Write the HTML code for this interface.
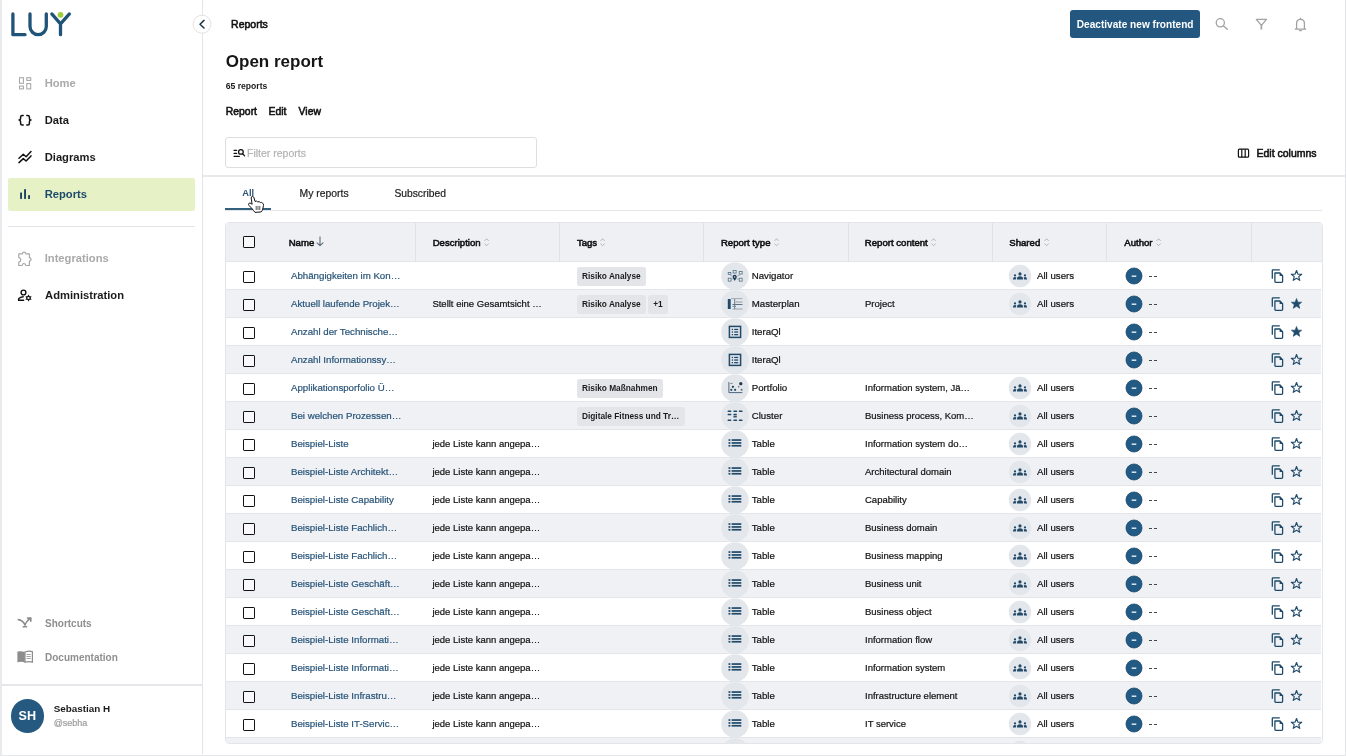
<!DOCTYPE html>
<html><head><meta charset="utf-8">
<style>
*{box-sizing:border-box;margin:0;padding:0}
html,body{width:1346px;height:756px;overflow:hidden;background:#fff}
body{position:relative;font-family:"Liberation Sans",sans-serif;color:#1b1b1b}
.abs{position:absolute}
.t{position:absolute;white-space:nowrap;line-height:1}
.r{-webkit-text-stroke:0.2px currentColor}
.sb{-webkit-text-stroke:0.55px currentColor}
svg{position:absolute;overflow:visible}
</style></head><body>
<div id="wrap" style="position:absolute;left:0;top:0;width:1346px;height:756px;will-change:transform">
<div class="abs" style="left:0;top:0;width:2px;height:756px;background:#e9eaed"></div>
<div class="abs" style="left:1345px;top:0;width:1px;height:756px;background:#e3e4e7"></div>
<div class="abs" style="left:0;top:754.5px;width:1346px;height:1.5px;background:#e6e7ea"></div>
<div class="abs" style="left:202px;top:0;width:1px;height:754px;background:#e3e4e8"></div>
<svg style="left:0;top:0" width="90" height="50" viewBox="0 0 90 50">
 <g fill="none" stroke="#1f5378" stroke-width="3.3" stroke-linecap="round" stroke-linejoin="round">
  <path d="M12.9 13.9V34.7H25"/>
  <path d="M30 13.9V26.5A8.15 8.15 0 0 0 46.3 26.5V13.9"/>
  <path d="M51.8 13.9L60.5 23.8L69.4 13.9M60.5 23.8V34.7"/>
 </g>
 <circle cx="60.5" cy="14.8" r="2.9" fill="#9fcd3c"/>
</svg>
<svg style="left:192px;top:14px" width="20" height="20" viewBox="0 0 20 20">
 <circle cx="10" cy="10.2" r="9" fill="#fff" stroke="#dfe1e5" stroke-width="1"/>
 <path d="M12 6.4L8 10.2L12 14" fill="none" stroke="#1c3444" stroke-width="1.5" stroke-linecap="round" stroke-linejoin="round"/>
</svg>
<svg style="left:0;top:60px" width="40" height="40" viewBox="0 60 40 40">
 <g fill="none" stroke="#a6a6a6" stroke-width="1.05">
  <rect x="19.5" y="77.7" width="3.9" height="5.6"/>
  <rect x="26.8" y="77.7" width="3.9" height="2.7"/>
  <rect x="19.5" y="86.1" width="3.9" height="2.8"/>
  <rect x="26.8" y="83.6" width="3.9" height="5.3"/>
 </g></svg>
<div class="t " style="left:44.7px;top:78.02px;font-size:11.2px;font-weight:700;color:#a9a9a9;">Home</div>
<svg style="left:0;top:100px" width="40" height="40" viewBox="0 100 40 40">
 <g fill="none" stroke="#111" stroke-width="1.5" stroke-linecap="round" stroke-linejoin="round">
  <path d="M23.2 115.4H22.2Q20.6 115.4 20.6 117V118.6Q20.6 120.1 19 120.1Q20.6 120.1 20.6 121.7V123.4Q20.6 124.9 22.2 124.9H23.2"/>
  <path d="M26.8 115.4H27.8Q29.4 115.4 29.4 117V118.6Q29.4 120.1 31 120.1Q29.4 120.1 29.4 121.7V123.4Q29.4 124.9 27.8 124.9H26.8"/>
 </g></svg>
<div class="t " style="left:44.7px;top:114.72px;font-size:11.2px;font-weight:700;color:#1b1b1b;">Data</div>
<svg style="left:0;top:140px" width="40" height="40" viewBox="0 140 40 40">
 <g fill="none" stroke="#111" stroke-width="1.5" stroke-linecap="round" stroke-linejoin="round">
  <path d="M19 158.3L23.3 154.3L26.1 156.7L31 151.6"/>
  <path d="M19 162.6L23.3 158.6L26.1 161L31 155.9"/>
 </g></svg>
<div class="t " style="left:44.7px;top:151.82px;font-size:11.2px;font-weight:700;color:#1b1b1b;">Diagrams</div>
<div class="abs" style="left:8px;top:178px;width:187px;height:33px;background:#e6f2c6;border-radius:2px"></div>
<svg style="left:0;top:180px" width="40" height="30" viewBox="0 180 40 30">
 <g fill="#1d4260">
  <rect x="20.1" y="192.4" width="1.9" height="6.5" rx="0.4"/>
  <rect x="24.1" y="189" width="1.9" height="9.9" rx="0.4"/>
  <rect x="28.1" y="195" width="1.9" height="3.9" rx="0.4"/>
 </g></svg>
<div class="t " style="left:44.7px;top:189.12px;font-size:11.2px;font-weight:700;color:#1d4a6b;">Reports</div>
<div class="abs" style="left:8px;top:226px;width:187px;height:1px;background:#e3e4e8"></div>
<svg style="left:0;top:241px" width="40" height="40" viewBox="0 240 40 40">
 <path d="M18.8 252.9H22.3Q22.6 251.2 24.1 251.2Q25.6 251.2 25.9 252.9H29.4V256.6Q31.1 256.9 31.1 258.4Q31.1 259.9 29.4 260.2V264.5H25.8Q25.4 262.5 23.9 262.5Q22.4 262.5 22 264.5H18.8V261.2Q20.8 260.8 20.8 258.8Q20.8 256.8 18.8 256.4Z" fill="none" stroke="#a8a8a8" stroke-width="1.2" stroke-linejoin="round"/>
</svg>
<div class="t " style="left:44.7px;top:253.12px;font-size:11.2px;font-weight:700;color:#a9a9a9;">Integrations</div>
<svg style="left:0;top:280px" width="40" height="30" viewBox="0 280 40 30">
 <g fill="none" stroke="#111" stroke-width="1.4" stroke-linecap="round" stroke-linejoin="round">
  <circle cx="23.5" cy="292.5" r="2.4"/>
  <path d="M23.2 296.8Q20.3 297.2 18.8 298.6Q18.4 299.2 18.6 300.3H23.6"/>
 </g>
 <g transform="translate(28.5 298)">
  <path d="M0 -3.6L1.05 -1.8H3.1L2.1 0L3.1 1.8H1.05L0 3.6L-1.05 1.8H-3.1L-2.1 0L-3.1 -1.8H-1.05Z" fill="#111"/>
  <circle r="1.1" fill="#fff"/>
 </g>
</svg>
<div class="t " style="left:45.1px;top:290.12px;font-size:11.2px;font-weight:700;color:#1b1b1b;">Administration</div>
<svg style="left:0;top:600px" width="40" height="40" viewBox="0 600 40 40">
 <g fill="none" stroke="#8c8c8c" stroke-width="1.6" stroke-linecap="round" stroke-linejoin="round">
  <path d="M18.3 619.6Q22.6 620 25 624.8"/>
  <path d="M25 624.8Q26.8 620.5 30.5 618.3"/>
  <path d="M27.6 618.1H30.8V621.2"/>
  <path d="M23.2 626.8H26.6"/>
 </g></svg>
<div class="t " style="left:45px;top:618.53px;font-size:10px;font-weight:700;color:#8f8f8f;">Shortcuts</div>
<svg style="left:0;top:640px" width="40" height="30" viewBox="0 640 40 30">
 <path d="M17.4 651.6Q21 650.6 24.8 652V662.2Q21 661.2 17.4 662.2Z" fill="#8c8c8c"/>
 <path d="M25 652Q28.8 650.6 32.4 651.6V662.2Q28.8 661.2 25 662.2Z" fill="none" stroke="#8c8c8c" stroke-width="1.2"/>
 <g stroke="#8c8c8c" stroke-width="0.8"><path d="M26.5 654.5H30.8M26.5 656.5H30.8M26.5 658.5H30.8"/></g>
</svg>
<div class="t " style="left:45px;top:652.74px;font-size:10px;font-weight:700;color:#8f8f8f;">Documentation</div>
<div class="abs" style="left:2px;top:684px;width:200px;height:1.5px;background:#e6e7ea"></div>
<div class="abs" style="left:10.6px;top:698.8px;width:33.8px;height:33.8px;border-radius:50%;background:#25597f"></div>
<div class="t " style="left:18.5px;top:709.63px;font-size:12.6px;font-weight:700;color:#fff;">SH</div>
<div class="t " style="left:53.7px;top:703.62px;font-size:9.9px;font-weight:700;color:#1b1b1b;">Sebastian H</div>
<div class="t r" style="left:53.7px;top:718.58px;font-size:9px;font-weight:400;color:#9c9c9c;">@sebha</div>
<div class="t sb" style="left:231.1px;top:18.71px;font-size:10.5px;font-weight:400;color:#111;">Reports</div>
<div class="abs" style="left:1070px;top:10.4px;width:129.5px;height:27.8px;background:#235780;border-radius:3px"></div>
<div class="t " style="left:1076.8px;top:20.45px;font-size:10.1px;font-weight:700;color:#fff;">Deactivate new frontend</div>
<svg style="left:1210px;top:14px" width="100" height="22" viewBox="1210 14 100 22">
 <g fill="none" stroke="#a2a2a2" stroke-width="1.3" stroke-linecap="round" stroke-linejoin="round">
  <circle cx="1220.3" cy="22.8" r="4.1"/>
  <path d="M1223.3 25.8L1227.3 29.3"/>
  <path d="M1256.3 19.4H1266.5L1261.4 25.4Z"/>
  <path d="M1261.4 25.2V29.5" stroke-width="1.7" stroke-linecap="butt"/>
  <path d="M1296.6 28.2V23.4Q1296.6 19.4 1300.5 19.4Q1304.4 19.4 1304.4 23.4V28.2L1305.6 29.2H1295.4Z"/>
  <path d="M1300.5 18.2V19.2M1299.6 30.6H1301.4"/>
 </g></svg>
<div class="t " style="left:225.8px;top:52.61px;font-size:17px;font-weight:700;color:#161616;">Open report</div>
<div class="t " style="left:225.8px;top:81.52px;font-size:8.6px;font-weight:700;color:#1b1b1b;">65 reports</div>
<div class="t sb" style="left:225.8px;top:106.60px;font-size:10.4px;font-weight:400;color:#111;">Report</div>
<div class="t sb" style="left:268.5px;top:106.60px;font-size:10.4px;font-weight:400;color:#111;">Edit</div>
<div class="t sb" style="left:298.6px;top:106.60px;font-size:10.4px;font-weight:400;color:#111;">View</div>
<div class="abs" style="left:225.4px;top:137.3px;width:311.6px;height:31.2px;border:1px solid #dcdee2;border-radius:3px;background:#fff"></div>
<svg style="left:230px;top:145px" width="20" height="16" viewBox="230 145 20 16">
 <g fill="none" stroke="#111" stroke-width="1.25" stroke-linecap="round">
  <path d="M234.1 150.4H236.6M234.1 153.4H236.6M234.1 156.4H239.3"/>
  <circle cx="240.9" cy="151.9" r="2.35"/>
  <path d="M242.7 153.8L244.6 155.9"/>
 </g></svg>
<div class="t r" style="left:247px;top:147.61px;font-size:10.5px;font-weight:400;color:#b2b2b2;">Filter reports</div>
<svg style="left:1236px;top:146px" width="16" height="14" viewBox="1236 146 16 14">
 <g fill="none" stroke="#111" stroke-width="1.2"><rect x="1238.4" y="149.2" width="10.2" height="8" rx="1"/><path d="M1241.8 149.2V157.2M1245.2 149.2V157.2"/></g>
</svg>
<div class="t sb" style="left:1256.5px;top:147.91px;font-size:10.5px;font-weight:400;color:#111;">Edit columns</div>
<div class="abs" style="left:203px;top:175px;width:1142px;height:2px;background:#e8e9ec"></div>
<div class="t " style="left:242.2px;top:188.63px;font-size:9.3px;font-weight:700;color:#2a5578;">All</div>
<div class="t r" style="left:299.5px;top:188.70px;font-size:10.4px;font-weight:400;color:#1b1b1b;">My reports</div>
<div class="t r" style="left:394.4px;top:188.78px;font-size:10.3px;font-weight:400;color:#1b1b1b;">Subscribed</div>
<div class="abs" style="left:225px;top:210px;width:1097px;height:1px;background:#e3e5e8"></div>
<div class="abs" style="left:225px;top:208.3px;width:45.7px;height:1.8px;background:#34607f"></div>
<div class="abs" style="left:225px;top:222px;width:1097.6px;height:521.6px;border:1px solid #e3e5ea;border-radius:4px;overflow:hidden;background:#fff">
<div class="abs" style="left:0;top:0;width:100%;height:39px;background:#eef0f4;border-bottom:1px solid #e3e5ea"></div>
<div class="abs" style="left:189.0px;top:0;width:1px;height:39px;background:#e0e2e7"></div>
<div class="abs" style="left:333.0px;top:0;width:1px;height:39px;background:#e0e2e7"></div>
<div class="abs" style="left:477.0px;top:0;width:1px;height:39px;background:#e0e2e7"></div>
<div class="abs" style="left:621.5px;top:0;width:1px;height:39px;background:#e0e2e7"></div>
<div class="abs" style="left:765.8px;top:0;width:1px;height:39px;background:#e0e2e7"></div>
<div class="abs" style="left:880.0999999999999px;top:0;width:1px;height:39px;background:#e0e2e7"></div>
<div class="abs" style="left:1024.6px;top:0;width:1px;height:39px;background:#e0e2e7"></div>
<div class="abs" style="left:16.80000000000001px;top:12.800000000000011px;width:12.3px;height:12.4px;border:1.4px solid #111;border-radius:1.1px;background:rgba(255,255,255,0.6)"></div>
<div class="t sb" style="left:62.7px;top:14.67px;font-size:9.6px;font-weight:400;color:#111;">Name</div>
<svg style="left:90px;top:13px" width="8" height="11" viewBox="0 0 8 11">
 <g fill="none" stroke="#5f6f7d" stroke-width="1.1" stroke-linecap="round" stroke-linejoin="round"><path d="M4 0.9V9.6M1 6.8L4 9.7L7 6.8"/></g></svg>
<div class="t sb" style="left:206.7px;top:14.67px;font-size:9.6px;font-weight:400;color:#111;">Description</div>
<div class="t sb" style="left:350.9px;top:14.67px;font-size:9.6px;font-weight:400;color:#111;">Tags</div>
<div class="t sb" style="left:494.9px;top:14.67px;font-size:9.6px;font-weight:400;color:#111;">Report type</div>
<div class="t sb" style="left:638.8px;top:14.67px;font-size:9.6px;font-weight:400;color:#111;">Report content</div>
<div class="t sb" style="left:783.3px;top:14.67px;font-size:9.6px;font-weight:400;color:#111;">Shared</div>
<div class="t sb" style="left:898.3px;top:14.67px;font-size:9.6px;font-weight:400;color:#111;">Author</div>
<svg style="left:257.9px;top:14.5px" width="6" height="9" viewBox="0 0 6 9">
 <g fill="none" stroke="#a9a9a9" stroke-width="0.85" stroke-linecap="round" stroke-linejoin="round"><path d="M0.8 2.6L2.6 0.8L4.4 2.6M0.8 5.9L2.6 7.7L4.4 5.9"/></g></svg>
<svg style="left:374.4px;top:14.5px" width="6" height="9" viewBox="0 0 6 9">
 <g fill="none" stroke="#a9a9a9" stroke-width="0.85" stroke-linecap="round" stroke-linejoin="round"><path d="M0.8 2.6L2.6 0.8L4.4 2.6M0.8 5.9L2.6 7.7L4.4 5.9"/></g></svg>
<svg style="left:547.7px;top:14.5px" width="6" height="9" viewBox="0 0 6 9">
 <g fill="none" stroke="#a9a9a9" stroke-width="0.85" stroke-linecap="round" stroke-linejoin="round"><path d="M0.8 2.6L2.6 0.8L4.4 2.6M0.8 5.9L2.6 7.7L4.4 5.9"/></g></svg>
<svg style="left:705.0px;top:14.5px" width="6" height="9" viewBox="0 0 6 9">
 <g fill="none" stroke="#a9a9a9" stroke-width="0.85" stroke-linecap="round" stroke-linejoin="round"><path d="M0.8 2.6L2.6 0.8L4.4 2.6M0.8 5.9L2.6 7.7L4.4 5.9"/></g></svg>
<svg style="left:817.5px;top:14.5px" width="6" height="9" viewBox="0 0 6 9">
 <g fill="none" stroke="#a9a9a9" stroke-width="0.85" stroke-linecap="round" stroke-linejoin="round"><path d="M0.8 2.6L2.6 0.8L4.4 2.6M0.8 5.9L2.6 7.7L4.4 5.9"/></g></svg>
<svg style="left:929.8px;top:14.5px" width="6" height="9" viewBox="0 0 6 9">
 <g fill="none" stroke="#a9a9a9" stroke-width="0.85" stroke-linecap="round" stroke-linejoin="round"><path d="M0.8 2.6L2.6 0.8L4.4 2.6M0.8 5.9L2.6 7.7L4.4 5.9"/></g></svg>
<div class="abs" style="left:0;top:39px;width:calc(100% - 0.8px);height:28px;background:#fff;border-bottom:1px solid #e3e5ea"></div>
<div class="abs" style="left:0;top:67px;width:calc(100% - 0.8px);height:28px;background:#eff1f5;border-bottom:1px solid #e3e5ea"></div>
<div class="abs" style="left:0;top:95px;width:calc(100% - 0.8px);height:28px;background:#fff;border-bottom:1px solid #e3e5ea"></div>
<div class="abs" style="left:0;top:123px;width:calc(100% - 0.8px);height:28px;background:#eff1f5;border-bottom:1px solid #e3e5ea"></div>
<div class="abs" style="left:0;top:151px;width:calc(100% - 0.8px);height:28px;background:#fff;border-bottom:1px solid #e3e5ea"></div>
<div class="abs" style="left:0;top:179px;width:calc(100% - 0.8px);height:28px;background:#eff1f5;border-bottom:1px solid #e3e5ea"></div>
<div class="abs" style="left:0;top:207px;width:calc(100% - 0.8px);height:28px;background:#fff;border-bottom:1px solid #e3e5ea"></div>
<div class="abs" style="left:0;top:235px;width:calc(100% - 0.8px);height:28px;background:#eff1f5;border-bottom:1px solid #e3e5ea"></div>
<div class="abs" style="left:0;top:263px;width:calc(100% - 0.8px);height:28px;background:#fff;border-bottom:1px solid #e3e5ea"></div>
<div class="abs" style="left:0;top:291px;width:calc(100% - 0.8px);height:28px;background:#eff1f5;border-bottom:1px solid #e3e5ea"></div>
<div class="abs" style="left:0;top:319px;width:calc(100% - 0.8px);height:28px;background:#fff;border-bottom:1px solid #e3e5ea"></div>
<div class="abs" style="left:0;top:347px;width:calc(100% - 0.8px);height:28px;background:#eff1f5;border-bottom:1px solid #e3e5ea"></div>
<div class="abs" style="left:0;top:375px;width:calc(100% - 0.8px);height:28px;background:#fff;border-bottom:1px solid #e3e5ea"></div>
<div class="abs" style="left:0;top:403px;width:calc(100% - 0.8px);height:28px;background:#eff1f5;border-bottom:1px solid #e3e5ea"></div>
<div class="abs" style="left:0;top:431px;width:calc(100% - 0.8px);height:28px;background:#fff;border-bottom:1px solid #e3e5ea"></div>
<div class="abs" style="left:0;top:459px;width:calc(100% - 0.8px);height:28px;background:#eff1f5;border-bottom:1px solid #e3e5ea"></div>
<div class="abs" style="left:0;top:487px;width:calc(100% - 0.8px);height:28px;background:#fff;border-bottom:1px solid #e3e5ea"></div>
<div class="abs" style="left:16.80000000000001px;top:47.60000000000002px;width:12.3px;height:12.4px;border:1.4px solid #111;border-radius:1.1px;background:rgba(255,255,255,0.6)"></div>
<div class="t r" style="left:65px;top:47.79px;font-size:9.7px;font-weight:400;color:#285478;">Abhängigkeiten im Kon…</div>
<div class="abs" style="left:350.70000000000005px;top:43.5px;display:flex;gap:1.8px"><div style="height:19px;padding:0 5.3px;background:#e3e5e9;border-radius:2.5px;font-size:8.3px;font-weight:700;line-height:19px;white-space:nowrap;color:#1b1b1b">Risiko Analyse</div></div>
<svg style="left:494.5px;top:39px" width="28" height="28" viewBox="-14 -14 28 28"><circle r="13.8" fill="#e3e6ea"/><g fill="#eef3f7" stroke="#5f7a90" stroke-width="0.9"><rect x="-6.75" y="-3.55" width="2.6" height="1.9"/><rect x="-1.85" y="-5.55" width="3" height="2.6"/><rect x="4.25" y="-4.55" width="2.9" height="2.6"/><rect x="-6.75" y="2.25" width="2.8" height="2.9"/><rect x="4.25" y="2.25" width="2.9" height="2.9"/></g><path d="M-5.2 -1.5L-2.6 0.2M5.4 -1.5L2.2 0.2M-3.6 3.3L-2.1 2.7M4 3.3L1.6 2.7" stroke="#7890a3" stroke-width="0.7" fill="none"/><path d="M-0.3 4.9L-2.1 1.9A2.05 2.05 0 1 1 1.5 1.9Z" fill="#1c3a52"/><circle cx="-0.3" cy="0.95" r="0.75" fill="#dfe8ef"/></svg>
<div class="t r" style="left:525.7px;top:47.79px;font-size:9.7px;font-weight:400;color:#111;">Navigator</div>
<svg style="left:782.3px;top:40.80000000000001px" width="24" height="24" viewBox="-12 -12 24 24"><circle r="11.2" fill="#e3e6ea"/><g fill="#1f4a6a"><circle cx="0" cy="-2.1" r="1.6"/><path d="M-3.1 3.5Q-3.1 0.2 0 0.2Q3.1 0.2 3.1 3.5Z"/><circle cx="-5" cy="-0.6" r="1.1"/><path d="M-7.1 3.5Q-7.1 1.1 -5 1.1Q-3.9 1.1 -3.6 1.8Q-4.1 2.6 -4.2 3.5Z"/><circle cx="5" cy="-0.6" r="1.1"/><path d="M7.1 3.5Q7.1 1.1 5 1.1Q3.9 1.1 3.6 1.8Q4.1 2.6 4.2 3.5Z"/></g></svg>
<div class="t r" style="left:811px;top:47.79px;font-size:9.7px;font-weight:400;color:#111;">All users</div>
<svg style="left:898.5px;top:43.60000000000002px" width="18" height="18" viewBox="-9 -9 18 18"><circle r="8.05" fill="#215a84" stroke="#1a4262" stroke-width="0.7"/><rect x="-2.3" y="-0.55" width="4.6" height="1.5" fill="#dfe7ee"/></svg>
<div class="abs" style="left:923px;top:53px;width:3px;height:1.2px;background:#444"></div><div class="abs" style="left:928px;top:53px;width:3px;height:1.2px;background:#444"></div>
<svg style="left:1045px;top:45.5px" width="14" height="15" viewBox="0 0 14 15"><g fill="none" stroke="#1f4a6a" stroke-width="1.3" stroke-linejoin="round"><path d="M1.3 9.8V1.6Q1.3 0.9 2 0.9H8.8"/><path d="M3.9 4V12.6Q3.9 13.4 4.6 13.4H10.8Q11.6 13.4 11.6 12.6V6.6L9 4Z"/></g><path d="M8.6 3.6L12 7H8.6Z" fill="#1f4a6a"/></svg>
<svg style="left:1064.6px;top:47.19999999999999px" width="11" height="11" viewBox="0 0 10.4 10.2"><path d="M5.2 0.4L6.5 3.8L10.1 3.9L7.3 6.2L8.3 9.7L5.2 7.7L2.1 9.7L3.1 6.2L0.3 3.9L3.9 3.8Z" fill="none" stroke="#1f4a6a" stroke-width="1.1" stroke-linejoin="round"/></svg>
<div class="abs" style="left:16.80000000000001px;top:75.60000000000002px;width:12.3px;height:12.4px;border:1.4px solid #111;border-radius:1.1px;background:rgba(255,255,255,0.6)"></div>
<div class="t r" style="left:65px;top:75.79px;font-size:9.7px;font-weight:400;color:#285478;">Aktuell laufende Projek…</div>
<div class="t r" style="left:206.4px;top:75.96px;font-size:9.5px;font-weight:400;color:#111;">Stellt eine Gesamtsicht …</div>
<div class="abs" style="left:350.70000000000005px;top:71.5px;display:flex;gap:1.8px"><div style="height:19px;padding:0 5.3px;background:#e3e5e9;border-radius:2.5px;font-size:8.3px;font-weight:700;line-height:19px;white-space:nowrap;color:#1b1b1b">Risiko Analyse</div><div style="height:19px;padding:0 5.4px;background:#e3e5e9;border-radius:2.5px;font-size:8.3px;font-weight:700;line-height:19px;white-space:nowrap;color:#1b1b1b">+1</div></div>
<svg style="left:494.5px;top:67px" width="28" height="28" viewBox="-14 -14 28 28"><circle r="13.8" fill="#e3e6ea"/><rect x="-7.2" y="-5.1" width="2.9" height="10.2" rx="0.4" fill="#1f4a6a"/><path d="M-4 -5.4H7.5" stroke="#8d9cab" stroke-width="0.8"/><path d="M-0.3 -5V5.2" stroke="#5f7488" stroke-width="0.9"/><path d="M0.5 -1.95H7.5" stroke="#a9b5c1" stroke-width="1.5"/><path d="M-2.5 0.5H7.5" stroke="#5d7285" stroke-width="1"/><path d="M-2.5 2.4H1" stroke="#6f8293" stroke-width="0.9"/><path d="M-2.5 5H7.5" stroke="#8d9cab" stroke-width="0.9"/></svg>
<div class="t r" style="left:525.7px;top:75.79px;font-size:9.7px;font-weight:400;color:#111;">Masterplan</div>
<div class="t r" style="left:639px;top:75.96px;font-size:9.5px;font-weight:400;color:#111;">Project</div>
<svg style="left:782.3px;top:68.80000000000001px" width="24" height="24" viewBox="-12 -12 24 24"><circle r="11.2" fill="#e3e6ea"/><g fill="#1f4a6a"><circle cx="0" cy="-2.1" r="1.6"/><path d="M-3.1 3.5Q-3.1 0.2 0 0.2Q3.1 0.2 3.1 3.5Z"/><circle cx="-5" cy="-0.6" r="1.1"/><path d="M-7.1 3.5Q-7.1 1.1 -5 1.1Q-3.9 1.1 -3.6 1.8Q-4.1 2.6 -4.2 3.5Z"/><circle cx="5" cy="-0.6" r="1.1"/><path d="M7.1 3.5Q7.1 1.1 5 1.1Q3.9 1.1 3.6 1.8Q4.1 2.6 4.2 3.5Z"/></g></svg>
<div class="t r" style="left:811px;top:75.79px;font-size:9.7px;font-weight:400;color:#111;">All users</div>
<svg style="left:898.5px;top:71.60000000000002px" width="18" height="18" viewBox="-9 -9 18 18"><circle r="8.05" fill="#215a84" stroke="#1a4262" stroke-width="0.7"/><rect x="-2.3" y="-0.55" width="4.6" height="1.5" fill="#dfe7ee"/></svg>
<div class="abs" style="left:923px;top:81px;width:3px;height:1.2px;background:#444"></div><div class="abs" style="left:928px;top:81px;width:3px;height:1.2px;background:#444"></div>
<svg style="left:1045px;top:73.5px" width="14" height="15" viewBox="0 0 14 15"><g fill="none" stroke="#1f4a6a" stroke-width="1.3" stroke-linejoin="round"><path d="M1.3 9.8V1.6Q1.3 0.9 2 0.9H8.8"/><path d="M3.9 4V12.6Q3.9 13.4 4.6 13.4H10.8Q11.6 13.4 11.6 12.6V6.6L9 4Z"/></g><path d="M8.6 3.6L12 7H8.6Z" fill="#1f4a6a"/></svg>
<svg style="left:1064.6px;top:75.19999999999999px" width="11" height="11" viewBox="0 0 10.4 10.2"><path d="M5.2 0.4L6.5 3.8L10.1 3.9L7.3 6.2L8.3 9.7L5.2 7.7L2.1 9.7L3.1 6.2L0.3 3.9L3.9 3.8Z" fill="#1f4a6a" stroke="#1f4a6a" stroke-width="0.6" stroke-linejoin="round"/></svg>
<div class="abs" style="left:16.80000000000001px;top:103.60000000000002px;width:12.3px;height:12.4px;border:1.4px solid #111;border-radius:1.1px;background:rgba(255,255,255,0.6)"></div>
<div class="t r" style="left:65px;top:103.79px;font-size:9.7px;font-weight:400;color:#285478;">Anzahl der Technische…</div>
<svg style="left:494.5px;top:95px" width="28" height="28" viewBox="-14 -14 28 28"><circle r="13.8" fill="#e3e6ea"/><rect x="-5.6" y="-5.6" width="11.2" height="11" fill="none" stroke="#1f4a6a" stroke-width="1.5"/><g fill="#1f4a6a"><rect x="-3.3" y="-3.2" width="1.4" height="1.3"/><rect x="-3.3" y="-0.6" width="1.4" height="1.3"/><rect x="-3.3" y="2" width="1.4" height="1.3"/><rect x="-0.8" y="-3.2" width="4" height="1.3"/><rect x="-0.8" y="-0.6" width="4" height="1.3"/><rect x="-0.8" y="2" width="4" height="1.3"/></g></svg>
<div class="t r" style="left:525.7px;top:103.79px;font-size:9.7px;font-weight:400;color:#111;">IteraQl</div>
<svg style="left:898.5px;top:99.60000000000002px" width="18" height="18" viewBox="-9 -9 18 18"><circle r="8.05" fill="#215a84" stroke="#1a4262" stroke-width="0.7"/><rect x="-2.3" y="-0.55" width="4.6" height="1.5" fill="#dfe7ee"/></svg>
<div class="abs" style="left:923px;top:109px;width:3px;height:1.2px;background:#444"></div><div class="abs" style="left:928px;top:109px;width:3px;height:1.2px;background:#444"></div>
<svg style="left:1045px;top:101.5px" width="14" height="15" viewBox="0 0 14 15"><g fill="none" stroke="#1f4a6a" stroke-width="1.3" stroke-linejoin="round"><path d="M1.3 9.8V1.6Q1.3 0.9 2 0.9H8.8"/><path d="M3.9 4V12.6Q3.9 13.4 4.6 13.4H10.8Q11.6 13.4 11.6 12.6V6.6L9 4Z"/></g><path d="M8.6 3.6L12 7H8.6Z" fill="#1f4a6a"/></svg>
<svg style="left:1064.6px;top:103.19999999999999px" width="11" height="11" viewBox="0 0 10.4 10.2"><path d="M5.2 0.4L6.5 3.8L10.1 3.9L7.3 6.2L8.3 9.7L5.2 7.7L2.1 9.7L3.1 6.2L0.3 3.9L3.9 3.8Z" fill="#1f4a6a" stroke="#1f4a6a" stroke-width="0.6" stroke-linejoin="round"/></svg>
<div class="abs" style="left:16.80000000000001px;top:131.60000000000002px;width:12.3px;height:12.4px;border:1.4px solid #111;border-radius:1.1px;background:rgba(255,255,255,0.6)"></div>
<div class="t r" style="left:65px;top:131.79px;font-size:9.7px;font-weight:400;color:#285478;">Anzahl Informationssy…</div>
<svg style="left:494.5px;top:123px" width="28" height="28" viewBox="-14 -14 28 28"><circle r="13.8" fill="#e3e6ea"/><rect x="-5.6" y="-5.6" width="11.2" height="11" fill="none" stroke="#1f4a6a" stroke-width="1.5"/><g fill="#1f4a6a"><rect x="-3.3" y="-3.2" width="1.4" height="1.3"/><rect x="-3.3" y="-0.6" width="1.4" height="1.3"/><rect x="-3.3" y="2" width="1.4" height="1.3"/><rect x="-0.8" y="-3.2" width="4" height="1.3"/><rect x="-0.8" y="-0.6" width="4" height="1.3"/><rect x="-0.8" y="2" width="4" height="1.3"/></g></svg>
<div class="t r" style="left:525.7px;top:131.79px;font-size:9.7px;font-weight:400;color:#111;">IteraQl</div>
<svg style="left:898.5px;top:127.60000000000002px" width="18" height="18" viewBox="-9 -9 18 18"><circle r="8.05" fill="#215a84" stroke="#1a4262" stroke-width="0.7"/><rect x="-2.3" y="-0.55" width="4.6" height="1.5" fill="#dfe7ee"/></svg>
<div class="abs" style="left:923px;top:137px;width:3px;height:1.2px;background:#444"></div><div class="abs" style="left:928px;top:137px;width:3px;height:1.2px;background:#444"></div>
<svg style="left:1045px;top:129.5px" width="14" height="15" viewBox="0 0 14 15"><g fill="none" stroke="#1f4a6a" stroke-width="1.3" stroke-linejoin="round"><path d="M1.3 9.8V1.6Q1.3 0.9 2 0.9H8.8"/><path d="M3.9 4V12.6Q3.9 13.4 4.6 13.4H10.8Q11.6 13.4 11.6 12.6V6.6L9 4Z"/></g><path d="M8.6 3.6L12 7H8.6Z" fill="#1f4a6a"/></svg>
<svg style="left:1064.6px;top:131.2px" width="11" height="11" viewBox="0 0 10.4 10.2"><path d="M5.2 0.4L6.5 3.8L10.1 3.9L7.3 6.2L8.3 9.7L5.2 7.7L2.1 9.7L3.1 6.2L0.3 3.9L3.9 3.8Z" fill="none" stroke="#1f4a6a" stroke-width="1.1" stroke-linejoin="round"/></svg>
<div class="abs" style="left:16.80000000000001px;top:159.60000000000002px;width:12.3px;height:12.4px;border:1.4px solid #111;border-radius:1.1px;background:rgba(255,255,255,0.6)"></div>
<div class="t r" style="left:65px;top:159.79px;font-size:9.7px;font-weight:400;color:#285478;">Applikationsporfolio Ü…</div>
<div class="abs" style="left:350.70000000000005px;top:155.5px;display:flex;gap:1.8px"><div style="height:19px;padding:0 5.3px;background:#e3e5e9;border-radius:2.5px;font-size:8.3px;font-weight:700;line-height:19px;white-space:nowrap;color:#1b1b1b">Risiko Maßnahmen</div></div>
<svg style="left:494.5px;top:151px" width="28" height="28" viewBox="-14 -14 28 28"><circle r="13.8" fill="#e3e6ea"/><path d="M-6.1 -5.9V4.6H7.3" fill="none" stroke="#4f677b" stroke-width="1"/><g fill="#1f4a6a"><circle cx="5.8" cy="-4.35" r="1.65" fill="#1b3a52"/><circle cx="-2.1" cy="-1.2" r="1.1" fill="#1b3a52"/><circle cx="3.7" cy="-1.2" r="0.8" fill="#56697a"/><circle cx="-3.7" cy="1.8" r="1.1"/><circle cx="0.1" cy="1.8" r="1.1"/><circle cx="6.6" cy="1.8" r="1" fill="#56697a"/><rect x="-4.5" y="-5.05" width="2" height="0.8" fill="#56697a"/></g></svg>
<div class="t r" style="left:525.7px;top:159.79px;font-size:9.7px;font-weight:400;color:#111;">Portfolio</div>
<div class="t r" style="left:639px;top:159.96px;font-size:9.5px;font-weight:400;color:#111;">Information system, Jä…</div>
<svg style="left:782.3px;top:152.8px" width="24" height="24" viewBox="-12 -12 24 24"><circle r="11.2" fill="#e3e6ea"/><g fill="#1f4a6a"><circle cx="0" cy="-2.1" r="1.6"/><path d="M-3.1 3.5Q-3.1 0.2 0 0.2Q3.1 0.2 3.1 3.5Z"/><circle cx="-5" cy="-0.6" r="1.1"/><path d="M-7.1 3.5Q-7.1 1.1 -5 1.1Q-3.9 1.1 -3.6 1.8Q-4.1 2.6 -4.2 3.5Z"/><circle cx="5" cy="-0.6" r="1.1"/><path d="M7.1 3.5Q7.1 1.1 5 1.1Q3.9 1.1 3.6 1.8Q4.1 2.6 4.2 3.5Z"/></g></svg>
<div class="t r" style="left:811px;top:159.79px;font-size:9.7px;font-weight:400;color:#111;">All users</div>
<svg style="left:898.5px;top:155.60000000000002px" width="18" height="18" viewBox="-9 -9 18 18"><circle r="8.05" fill="#215a84" stroke="#1a4262" stroke-width="0.7"/><rect x="-2.3" y="-0.55" width="4.6" height="1.5" fill="#dfe7ee"/></svg>
<div class="abs" style="left:923px;top:165px;width:3px;height:1.2px;background:#444"></div><div class="abs" style="left:928px;top:165px;width:3px;height:1.2px;background:#444"></div>
<svg style="left:1045px;top:157.5px" width="14" height="15" viewBox="0 0 14 15"><g fill="none" stroke="#1f4a6a" stroke-width="1.3" stroke-linejoin="round"><path d="M1.3 9.8V1.6Q1.3 0.9 2 0.9H8.8"/><path d="M3.9 4V12.6Q3.9 13.4 4.6 13.4H10.8Q11.6 13.4 11.6 12.6V6.6L9 4Z"/></g><path d="M8.6 3.6L12 7H8.6Z" fill="#1f4a6a"/></svg>
<svg style="left:1064.6px;top:159.2px" width="11" height="11" viewBox="0 0 10.4 10.2"><path d="M5.2 0.4L6.5 3.8L10.1 3.9L7.3 6.2L8.3 9.7L5.2 7.7L2.1 9.7L3.1 6.2L0.3 3.9L3.9 3.8Z" fill="none" stroke="#1f4a6a" stroke-width="1.1" stroke-linejoin="round"/></svg>
<div class="abs" style="left:16.80000000000001px;top:187.60000000000002px;width:12.3px;height:12.4px;border:1.4px solid #111;border-radius:1.1px;background:rgba(255,255,255,0.6)"></div>
<div class="t r" style="left:65px;top:187.79px;font-size:9.7px;font-weight:400;color:#285478;">Bei welchen Prozessen…</div>
<div class="abs" style="left:350.70000000000005px;top:183.5px;display:flex;gap:1.8px"><div style="height:19px;padding:0 5.3px;background:#e3e5e9;border-radius:2.5px;font-size:8.3px;font-weight:700;line-height:19px;white-space:nowrap;color:#1b1b1b">Digitale Fitness und Tr…</div></div>
<svg style="left:494.5px;top:179px" width="28" height="28" viewBox="-14 -14 28 28"><circle r="13.8" fill="#e3e6ea"/><g fill="#1f4a6a"><rect x="-7.4" y="-5.5" width="3.7" height="1.6" rx="0.5"/><rect x="-7.4" y="3.5" width="3.7" height="1.6" rx="0.5"/><rect x="-1.6" y="-5.5" width="3.7" height="1.6" rx="0.5"/><rect x="-1.6" y="3.5" width="3.7" height="1.6" rx="0.5"/><rect x="3.8" y="-5.5" width="3.7" height="1.6" rx="0.5"/><rect x="3.8" y="3.5" width="3.7" height="1.6" rx="0.5"/><rect x="-7.4" y="-2.3" width="3.7" height="1.6" rx="0.5"/><rect x="-1.6" y="-2.2" width="3.4" height="1.5" rx="0.4"/><rect x="-1.6" y="-0.3" width="3.4" height="1.9" rx="0.4" fill="#2f5573"/></g></svg>
<div class="t r" style="left:525.7px;top:187.79px;font-size:9.7px;font-weight:400;color:#111;">Cluster</div>
<div class="t r" style="left:639px;top:187.96px;font-size:9.5px;font-weight:400;color:#111;">Business process, Kom…</div>
<svg style="left:782.3px;top:180.8px" width="24" height="24" viewBox="-12 -12 24 24"><circle r="11.2" fill="#e3e6ea"/><g fill="#1f4a6a"><circle cx="0" cy="-2.1" r="1.6"/><path d="M-3.1 3.5Q-3.1 0.2 0 0.2Q3.1 0.2 3.1 3.5Z"/><circle cx="-5" cy="-0.6" r="1.1"/><path d="M-7.1 3.5Q-7.1 1.1 -5 1.1Q-3.9 1.1 -3.6 1.8Q-4.1 2.6 -4.2 3.5Z"/><circle cx="5" cy="-0.6" r="1.1"/><path d="M7.1 3.5Q7.1 1.1 5 1.1Q3.9 1.1 3.6 1.8Q4.1 2.6 4.2 3.5Z"/></g></svg>
<div class="t r" style="left:811px;top:187.79px;font-size:9.7px;font-weight:400;color:#111;">All users</div>
<svg style="left:898.5px;top:183.60000000000002px" width="18" height="18" viewBox="-9 -9 18 18"><circle r="8.05" fill="#215a84" stroke="#1a4262" stroke-width="0.7"/><rect x="-2.3" y="-0.55" width="4.6" height="1.5" fill="#dfe7ee"/></svg>
<div class="abs" style="left:923px;top:193px;width:3px;height:1.2px;background:#444"></div><div class="abs" style="left:928px;top:193px;width:3px;height:1.2px;background:#444"></div>
<svg style="left:1045px;top:185.5px" width="14" height="15" viewBox="0 0 14 15"><g fill="none" stroke="#1f4a6a" stroke-width="1.3" stroke-linejoin="round"><path d="M1.3 9.8V1.6Q1.3 0.9 2 0.9H8.8"/><path d="M3.9 4V12.6Q3.9 13.4 4.6 13.4H10.8Q11.6 13.4 11.6 12.6V6.6L9 4Z"/></g><path d="M8.6 3.6L12 7H8.6Z" fill="#1f4a6a"/></svg>
<svg style="left:1064.6px;top:187.2px" width="11" height="11" viewBox="0 0 10.4 10.2"><path d="M5.2 0.4L6.5 3.8L10.1 3.9L7.3 6.2L8.3 9.7L5.2 7.7L2.1 9.7L3.1 6.2L0.3 3.9L3.9 3.8Z" fill="none" stroke="#1f4a6a" stroke-width="1.1" stroke-linejoin="round"/></svg>
<div class="abs" style="left:16.80000000000001px;top:215.60000000000002px;width:12.3px;height:12.4px;border:1.4px solid #111;border-radius:1.1px;background:rgba(255,255,255,0.6)"></div>
<div class="t r" style="left:65px;top:215.79px;font-size:9.7px;font-weight:400;color:#285478;">Beispiel-Liste</div>
<div class="t r" style="left:206.4px;top:215.96px;font-size:9.5px;font-weight:400;color:#111;">jede Liste kann angepa…</div>
<svg style="left:494.5px;top:207px" width="28" height="28" viewBox="-14 -14 28 28"><circle r="13.8" fill="#e3e6ea"/><g fill="#1f4a6a"><rect x="-6.5" y="-4.8" width="1.9" height="1.7"/><rect x="-6.5" y="-1.9" width="1.9" height="1.7"/><rect x="-6.5" y="0.9" width="1.9" height="1.7"/><rect x="-3.4" y="-4.8" width="9.7" height="1.7"/><rect x="-3.4" y="-1.9" width="9.7" height="1.7"/><rect x="-3.4" y="0.9" width="9.7" height="1.7"/></g></svg>
<div class="t r" style="left:525.7px;top:215.79px;font-size:9.7px;font-weight:400;color:#111;">Table</div>
<div class="t r" style="left:639px;top:215.96px;font-size:9.5px;font-weight:400;color:#111;">Information system do…</div>
<svg style="left:782.3px;top:208.8px" width="24" height="24" viewBox="-12 -12 24 24"><circle r="11.2" fill="#e3e6ea"/><g fill="#1f4a6a"><circle cx="0" cy="-2.1" r="1.6"/><path d="M-3.1 3.5Q-3.1 0.2 0 0.2Q3.1 0.2 3.1 3.5Z"/><circle cx="-5" cy="-0.6" r="1.1"/><path d="M-7.1 3.5Q-7.1 1.1 -5 1.1Q-3.9 1.1 -3.6 1.8Q-4.1 2.6 -4.2 3.5Z"/><circle cx="5" cy="-0.6" r="1.1"/><path d="M7.1 3.5Q7.1 1.1 5 1.1Q3.9 1.1 3.6 1.8Q4.1 2.6 4.2 3.5Z"/></g></svg>
<div class="t r" style="left:811px;top:215.79px;font-size:9.7px;font-weight:400;color:#111;">All users</div>
<svg style="left:898.5px;top:211.60000000000002px" width="18" height="18" viewBox="-9 -9 18 18"><circle r="8.05" fill="#215a84" stroke="#1a4262" stroke-width="0.7"/><rect x="-2.3" y="-0.55" width="4.6" height="1.5" fill="#dfe7ee"/></svg>
<div class="abs" style="left:923px;top:221px;width:3px;height:1.2px;background:#444"></div><div class="abs" style="left:928px;top:221px;width:3px;height:1.2px;background:#444"></div>
<svg style="left:1045px;top:213.5px" width="14" height="15" viewBox="0 0 14 15"><g fill="none" stroke="#1f4a6a" stroke-width="1.3" stroke-linejoin="round"><path d="M1.3 9.8V1.6Q1.3 0.9 2 0.9H8.8"/><path d="M3.9 4V12.6Q3.9 13.4 4.6 13.4H10.8Q11.6 13.4 11.6 12.6V6.6L9 4Z"/></g><path d="M8.6 3.6L12 7H8.6Z" fill="#1f4a6a"/></svg>
<svg style="left:1064.6px;top:215.2px" width="11" height="11" viewBox="0 0 10.4 10.2"><path d="M5.2 0.4L6.5 3.8L10.1 3.9L7.3 6.2L8.3 9.7L5.2 7.7L2.1 9.7L3.1 6.2L0.3 3.9L3.9 3.8Z" fill="none" stroke="#1f4a6a" stroke-width="1.1" stroke-linejoin="round"/></svg>
<div class="abs" style="left:16.80000000000001px;top:243.60000000000002px;width:12.3px;height:12.4px;border:1.4px solid #111;border-radius:1.1px;background:rgba(255,255,255,0.6)"></div>
<div class="t r" style="left:65px;top:243.79px;font-size:9.7px;font-weight:400;color:#285478;">Beispiel-Liste Architekt…</div>
<div class="t r" style="left:206.4px;top:243.96px;font-size:9.5px;font-weight:400;color:#111;">jede Liste kann angepa…</div>
<svg style="left:494.5px;top:235px" width="28" height="28" viewBox="-14 -14 28 28"><circle r="13.8" fill="#e3e6ea"/><g fill="#1f4a6a"><rect x="-6.5" y="-4.8" width="1.9" height="1.7"/><rect x="-6.5" y="-1.9" width="1.9" height="1.7"/><rect x="-6.5" y="0.9" width="1.9" height="1.7"/><rect x="-3.4" y="-4.8" width="9.7" height="1.7"/><rect x="-3.4" y="-1.9" width="9.7" height="1.7"/><rect x="-3.4" y="0.9" width="9.7" height="1.7"/></g></svg>
<div class="t r" style="left:525.7px;top:243.79px;font-size:9.7px;font-weight:400;color:#111;">Table</div>
<div class="t r" style="left:639px;top:243.96px;font-size:9.5px;font-weight:400;color:#111;">Architectural domain</div>
<svg style="left:782.3px;top:236.8px" width="24" height="24" viewBox="-12 -12 24 24"><circle r="11.2" fill="#e3e6ea"/><g fill="#1f4a6a"><circle cx="0" cy="-2.1" r="1.6"/><path d="M-3.1 3.5Q-3.1 0.2 0 0.2Q3.1 0.2 3.1 3.5Z"/><circle cx="-5" cy="-0.6" r="1.1"/><path d="M-7.1 3.5Q-7.1 1.1 -5 1.1Q-3.9 1.1 -3.6 1.8Q-4.1 2.6 -4.2 3.5Z"/><circle cx="5" cy="-0.6" r="1.1"/><path d="M7.1 3.5Q7.1 1.1 5 1.1Q3.9 1.1 3.6 1.8Q4.1 2.6 4.2 3.5Z"/></g></svg>
<div class="t r" style="left:811px;top:243.79px;font-size:9.7px;font-weight:400;color:#111;">All users</div>
<svg style="left:898.5px;top:239.60000000000002px" width="18" height="18" viewBox="-9 -9 18 18"><circle r="8.05" fill="#215a84" stroke="#1a4262" stroke-width="0.7"/><rect x="-2.3" y="-0.55" width="4.6" height="1.5" fill="#dfe7ee"/></svg>
<div class="abs" style="left:923px;top:249px;width:3px;height:1.2px;background:#444"></div><div class="abs" style="left:928px;top:249px;width:3px;height:1.2px;background:#444"></div>
<svg style="left:1045px;top:241.5px" width="14" height="15" viewBox="0 0 14 15"><g fill="none" stroke="#1f4a6a" stroke-width="1.3" stroke-linejoin="round"><path d="M1.3 9.8V1.6Q1.3 0.9 2 0.9H8.8"/><path d="M3.9 4V12.6Q3.9 13.4 4.6 13.4H10.8Q11.6 13.4 11.6 12.6V6.6L9 4Z"/></g><path d="M8.6 3.6L12 7H8.6Z" fill="#1f4a6a"/></svg>
<svg style="left:1064.6px;top:243.2px" width="11" height="11" viewBox="0 0 10.4 10.2"><path d="M5.2 0.4L6.5 3.8L10.1 3.9L7.3 6.2L8.3 9.7L5.2 7.7L2.1 9.7L3.1 6.2L0.3 3.9L3.9 3.8Z" fill="none" stroke="#1f4a6a" stroke-width="1.1" stroke-linejoin="round"/></svg>
<div class="abs" style="left:16.80000000000001px;top:271.6px;width:12.3px;height:12.4px;border:1.4px solid #111;border-radius:1.1px;background:rgba(255,255,255,0.6)"></div>
<div class="t r" style="left:65px;top:271.79px;font-size:9.7px;font-weight:400;color:#285478;">Beispiel-Liste Capability</div>
<div class="t r" style="left:206.4px;top:271.96px;font-size:9.5px;font-weight:400;color:#111;">jede Liste kann angepa…</div>
<svg style="left:494.5px;top:263px" width="28" height="28" viewBox="-14 -14 28 28"><circle r="13.8" fill="#e3e6ea"/><g fill="#1f4a6a"><rect x="-6.5" y="-4.8" width="1.9" height="1.7"/><rect x="-6.5" y="-1.9" width="1.9" height="1.7"/><rect x="-6.5" y="0.9" width="1.9" height="1.7"/><rect x="-3.4" y="-4.8" width="9.7" height="1.7"/><rect x="-3.4" y="-1.9" width="9.7" height="1.7"/><rect x="-3.4" y="0.9" width="9.7" height="1.7"/></g></svg>
<div class="t r" style="left:525.7px;top:271.79px;font-size:9.7px;font-weight:400;color:#111;">Table</div>
<div class="t r" style="left:639px;top:271.96px;font-size:9.5px;font-weight:400;color:#111;">Capability</div>
<svg style="left:782.3px;top:264.8px" width="24" height="24" viewBox="-12 -12 24 24"><circle r="11.2" fill="#e3e6ea"/><g fill="#1f4a6a"><circle cx="0" cy="-2.1" r="1.6"/><path d="M-3.1 3.5Q-3.1 0.2 0 0.2Q3.1 0.2 3.1 3.5Z"/><circle cx="-5" cy="-0.6" r="1.1"/><path d="M-7.1 3.5Q-7.1 1.1 -5 1.1Q-3.9 1.1 -3.6 1.8Q-4.1 2.6 -4.2 3.5Z"/><circle cx="5" cy="-0.6" r="1.1"/><path d="M7.1 3.5Q7.1 1.1 5 1.1Q3.9 1.1 3.6 1.8Q4.1 2.6 4.2 3.5Z"/></g></svg>
<div class="t r" style="left:811px;top:271.79px;font-size:9.7px;font-weight:400;color:#111;">All users</div>
<svg style="left:898.5px;top:267.6px" width="18" height="18" viewBox="-9 -9 18 18"><circle r="8.05" fill="#215a84" stroke="#1a4262" stroke-width="0.7"/><rect x="-2.3" y="-0.55" width="4.6" height="1.5" fill="#dfe7ee"/></svg>
<div class="abs" style="left:923px;top:277px;width:3px;height:1.2px;background:#444"></div><div class="abs" style="left:928px;top:277px;width:3px;height:1.2px;background:#444"></div>
<svg style="left:1045px;top:269.5px" width="14" height="15" viewBox="0 0 14 15"><g fill="none" stroke="#1f4a6a" stroke-width="1.3" stroke-linejoin="round"><path d="M1.3 9.8V1.6Q1.3 0.9 2 0.9H8.8"/><path d="M3.9 4V12.6Q3.9 13.4 4.6 13.4H10.8Q11.6 13.4 11.6 12.6V6.6L9 4Z"/></g><path d="M8.6 3.6L12 7H8.6Z" fill="#1f4a6a"/></svg>
<svg style="left:1064.6px;top:271.2px" width="11" height="11" viewBox="0 0 10.4 10.2"><path d="M5.2 0.4L6.5 3.8L10.1 3.9L7.3 6.2L8.3 9.7L5.2 7.7L2.1 9.7L3.1 6.2L0.3 3.9L3.9 3.8Z" fill="none" stroke="#1f4a6a" stroke-width="1.1" stroke-linejoin="round"/></svg>
<div class="abs" style="left:16.80000000000001px;top:299.6px;width:12.3px;height:12.4px;border:1.4px solid #111;border-radius:1.1px;background:rgba(255,255,255,0.6)"></div>
<div class="t r" style="left:65px;top:299.79px;font-size:9.7px;font-weight:400;color:#285478;">Beispiel-Liste Fachlich…</div>
<div class="t r" style="left:206.4px;top:299.96px;font-size:9.5px;font-weight:400;color:#111;">jede Liste kann angepa…</div>
<svg style="left:494.5px;top:291px" width="28" height="28" viewBox="-14 -14 28 28"><circle r="13.8" fill="#e3e6ea"/><g fill="#1f4a6a"><rect x="-6.5" y="-4.8" width="1.9" height="1.7"/><rect x="-6.5" y="-1.9" width="1.9" height="1.7"/><rect x="-6.5" y="0.9" width="1.9" height="1.7"/><rect x="-3.4" y="-4.8" width="9.7" height="1.7"/><rect x="-3.4" y="-1.9" width="9.7" height="1.7"/><rect x="-3.4" y="0.9" width="9.7" height="1.7"/></g></svg>
<div class="t r" style="left:525.7px;top:299.79px;font-size:9.7px;font-weight:400;color:#111;">Table</div>
<div class="t r" style="left:639px;top:299.96px;font-size:9.5px;font-weight:400;color:#111;">Business domain</div>
<svg style="left:782.3px;top:292.79999999999995px" width="24" height="24" viewBox="-12 -12 24 24"><circle r="11.2" fill="#e3e6ea"/><g fill="#1f4a6a"><circle cx="0" cy="-2.1" r="1.6"/><path d="M-3.1 3.5Q-3.1 0.2 0 0.2Q3.1 0.2 3.1 3.5Z"/><circle cx="-5" cy="-0.6" r="1.1"/><path d="M-7.1 3.5Q-7.1 1.1 -5 1.1Q-3.9 1.1 -3.6 1.8Q-4.1 2.6 -4.2 3.5Z"/><circle cx="5" cy="-0.6" r="1.1"/><path d="M7.1 3.5Q7.1 1.1 5 1.1Q3.9 1.1 3.6 1.8Q4.1 2.6 4.2 3.5Z"/></g></svg>
<div class="t r" style="left:811px;top:299.79px;font-size:9.7px;font-weight:400;color:#111;">All users</div>
<svg style="left:898.5px;top:295.6px" width="18" height="18" viewBox="-9 -9 18 18"><circle r="8.05" fill="#215a84" stroke="#1a4262" stroke-width="0.7"/><rect x="-2.3" y="-0.55" width="4.6" height="1.5" fill="#dfe7ee"/></svg>
<div class="abs" style="left:923px;top:305px;width:3px;height:1.2px;background:#444"></div><div class="abs" style="left:928px;top:305px;width:3px;height:1.2px;background:#444"></div>
<svg style="left:1045px;top:297.5px" width="14" height="15" viewBox="0 0 14 15"><g fill="none" stroke="#1f4a6a" stroke-width="1.3" stroke-linejoin="round"><path d="M1.3 9.8V1.6Q1.3 0.9 2 0.9H8.8"/><path d="M3.9 4V12.6Q3.9 13.4 4.6 13.4H10.8Q11.6 13.4 11.6 12.6V6.6L9 4Z"/></g><path d="M8.6 3.6L12 7H8.6Z" fill="#1f4a6a"/></svg>
<svg style="left:1064.6px;top:299.20000000000005px" width="11" height="11" viewBox="0 0 10.4 10.2"><path d="M5.2 0.4L6.5 3.8L10.1 3.9L7.3 6.2L8.3 9.7L5.2 7.7L2.1 9.7L3.1 6.2L0.3 3.9L3.9 3.8Z" fill="none" stroke="#1f4a6a" stroke-width="1.1" stroke-linejoin="round"/></svg>
<div class="abs" style="left:16.80000000000001px;top:327.6px;width:12.3px;height:12.4px;border:1.4px solid #111;border-radius:1.1px;background:rgba(255,255,255,0.6)"></div>
<div class="t r" style="left:65px;top:327.79px;font-size:9.7px;font-weight:400;color:#285478;">Beispiel-Liste Fachlich…</div>
<div class="t r" style="left:206.4px;top:327.96px;font-size:9.5px;font-weight:400;color:#111;">jede Liste kann angepa…</div>
<svg style="left:494.5px;top:319px" width="28" height="28" viewBox="-14 -14 28 28"><circle r="13.8" fill="#e3e6ea"/><g fill="#1f4a6a"><rect x="-6.5" y="-4.8" width="1.9" height="1.7"/><rect x="-6.5" y="-1.9" width="1.9" height="1.7"/><rect x="-6.5" y="0.9" width="1.9" height="1.7"/><rect x="-3.4" y="-4.8" width="9.7" height="1.7"/><rect x="-3.4" y="-1.9" width="9.7" height="1.7"/><rect x="-3.4" y="0.9" width="9.7" height="1.7"/></g></svg>
<div class="t r" style="left:525.7px;top:327.79px;font-size:9.7px;font-weight:400;color:#111;">Table</div>
<div class="t r" style="left:639px;top:327.96px;font-size:9.5px;font-weight:400;color:#111;">Business mapping</div>
<svg style="left:782.3px;top:320.79999999999995px" width="24" height="24" viewBox="-12 -12 24 24"><circle r="11.2" fill="#e3e6ea"/><g fill="#1f4a6a"><circle cx="0" cy="-2.1" r="1.6"/><path d="M-3.1 3.5Q-3.1 0.2 0 0.2Q3.1 0.2 3.1 3.5Z"/><circle cx="-5" cy="-0.6" r="1.1"/><path d="M-7.1 3.5Q-7.1 1.1 -5 1.1Q-3.9 1.1 -3.6 1.8Q-4.1 2.6 -4.2 3.5Z"/><circle cx="5" cy="-0.6" r="1.1"/><path d="M7.1 3.5Q7.1 1.1 5 1.1Q3.9 1.1 3.6 1.8Q4.1 2.6 4.2 3.5Z"/></g></svg>
<div class="t r" style="left:811px;top:327.79px;font-size:9.7px;font-weight:400;color:#111;">All users</div>
<svg style="left:898.5px;top:323.6px" width="18" height="18" viewBox="-9 -9 18 18"><circle r="8.05" fill="#215a84" stroke="#1a4262" stroke-width="0.7"/><rect x="-2.3" y="-0.55" width="4.6" height="1.5" fill="#dfe7ee"/></svg>
<div class="abs" style="left:923px;top:333px;width:3px;height:1.2px;background:#444"></div><div class="abs" style="left:928px;top:333px;width:3px;height:1.2px;background:#444"></div>
<svg style="left:1045px;top:325.5px" width="14" height="15" viewBox="0 0 14 15"><g fill="none" stroke="#1f4a6a" stroke-width="1.3" stroke-linejoin="round"><path d="M1.3 9.8V1.6Q1.3 0.9 2 0.9H8.8"/><path d="M3.9 4V12.6Q3.9 13.4 4.6 13.4H10.8Q11.6 13.4 11.6 12.6V6.6L9 4Z"/></g><path d="M8.6 3.6L12 7H8.6Z" fill="#1f4a6a"/></svg>
<svg style="left:1064.6px;top:327.20000000000005px" width="11" height="11" viewBox="0 0 10.4 10.2"><path d="M5.2 0.4L6.5 3.8L10.1 3.9L7.3 6.2L8.3 9.7L5.2 7.7L2.1 9.7L3.1 6.2L0.3 3.9L3.9 3.8Z" fill="none" stroke="#1f4a6a" stroke-width="1.1" stroke-linejoin="round"/></svg>
<div class="abs" style="left:16.80000000000001px;top:355.6px;width:12.3px;height:12.4px;border:1.4px solid #111;border-radius:1.1px;background:rgba(255,255,255,0.6)"></div>
<div class="t r" style="left:65px;top:355.79px;font-size:9.7px;font-weight:400;color:#285478;">Beispiel-Liste Geschäft…</div>
<div class="t r" style="left:206.4px;top:355.96px;font-size:9.5px;font-weight:400;color:#111;">jede Liste kann angepa…</div>
<svg style="left:494.5px;top:347px" width="28" height="28" viewBox="-14 -14 28 28"><circle r="13.8" fill="#e3e6ea"/><g fill="#1f4a6a"><rect x="-6.5" y="-4.8" width="1.9" height="1.7"/><rect x="-6.5" y="-1.9" width="1.9" height="1.7"/><rect x="-6.5" y="0.9" width="1.9" height="1.7"/><rect x="-3.4" y="-4.8" width="9.7" height="1.7"/><rect x="-3.4" y="-1.9" width="9.7" height="1.7"/><rect x="-3.4" y="0.9" width="9.7" height="1.7"/></g></svg>
<div class="t r" style="left:525.7px;top:355.79px;font-size:9.7px;font-weight:400;color:#111;">Table</div>
<div class="t r" style="left:639px;top:355.96px;font-size:9.5px;font-weight:400;color:#111;">Business unit</div>
<svg style="left:782.3px;top:348.79999999999995px" width="24" height="24" viewBox="-12 -12 24 24"><circle r="11.2" fill="#e3e6ea"/><g fill="#1f4a6a"><circle cx="0" cy="-2.1" r="1.6"/><path d="M-3.1 3.5Q-3.1 0.2 0 0.2Q3.1 0.2 3.1 3.5Z"/><circle cx="-5" cy="-0.6" r="1.1"/><path d="M-7.1 3.5Q-7.1 1.1 -5 1.1Q-3.9 1.1 -3.6 1.8Q-4.1 2.6 -4.2 3.5Z"/><circle cx="5" cy="-0.6" r="1.1"/><path d="M7.1 3.5Q7.1 1.1 5 1.1Q3.9 1.1 3.6 1.8Q4.1 2.6 4.2 3.5Z"/></g></svg>
<div class="t r" style="left:811px;top:355.79px;font-size:9.7px;font-weight:400;color:#111;">All users</div>
<svg style="left:898.5px;top:351.6px" width="18" height="18" viewBox="-9 -9 18 18"><circle r="8.05" fill="#215a84" stroke="#1a4262" stroke-width="0.7"/><rect x="-2.3" y="-0.55" width="4.6" height="1.5" fill="#dfe7ee"/></svg>
<div class="abs" style="left:923px;top:361px;width:3px;height:1.2px;background:#444"></div><div class="abs" style="left:928px;top:361px;width:3px;height:1.2px;background:#444"></div>
<svg style="left:1045px;top:353.5px" width="14" height="15" viewBox="0 0 14 15"><g fill="none" stroke="#1f4a6a" stroke-width="1.3" stroke-linejoin="round"><path d="M1.3 9.8V1.6Q1.3 0.9 2 0.9H8.8"/><path d="M3.9 4V12.6Q3.9 13.4 4.6 13.4H10.8Q11.6 13.4 11.6 12.6V6.6L9 4Z"/></g><path d="M8.6 3.6L12 7H8.6Z" fill="#1f4a6a"/></svg>
<svg style="left:1064.6px;top:355.20000000000005px" width="11" height="11" viewBox="0 0 10.4 10.2"><path d="M5.2 0.4L6.5 3.8L10.1 3.9L7.3 6.2L8.3 9.7L5.2 7.7L2.1 9.7L3.1 6.2L0.3 3.9L3.9 3.8Z" fill="none" stroke="#1f4a6a" stroke-width="1.1" stroke-linejoin="round"/></svg>
<div class="abs" style="left:16.80000000000001px;top:383.6px;width:12.3px;height:12.4px;border:1.4px solid #111;border-radius:1.1px;background:rgba(255,255,255,0.6)"></div>
<div class="t r" style="left:65px;top:383.79px;font-size:9.7px;font-weight:400;color:#285478;">Beispiel-Liste Geschäft…</div>
<div class="t r" style="left:206.4px;top:383.96px;font-size:9.5px;font-weight:400;color:#111;">jede Liste kann angepa…</div>
<svg style="left:494.5px;top:375px" width="28" height="28" viewBox="-14 -14 28 28"><circle r="13.8" fill="#e3e6ea"/><g fill="#1f4a6a"><rect x="-6.5" y="-4.8" width="1.9" height="1.7"/><rect x="-6.5" y="-1.9" width="1.9" height="1.7"/><rect x="-6.5" y="0.9" width="1.9" height="1.7"/><rect x="-3.4" y="-4.8" width="9.7" height="1.7"/><rect x="-3.4" y="-1.9" width="9.7" height="1.7"/><rect x="-3.4" y="0.9" width="9.7" height="1.7"/></g></svg>
<div class="t r" style="left:525.7px;top:383.79px;font-size:9.7px;font-weight:400;color:#111;">Table</div>
<div class="t r" style="left:639px;top:383.96px;font-size:9.5px;font-weight:400;color:#111;">Business object</div>
<svg style="left:782.3px;top:376.79999999999995px" width="24" height="24" viewBox="-12 -12 24 24"><circle r="11.2" fill="#e3e6ea"/><g fill="#1f4a6a"><circle cx="0" cy="-2.1" r="1.6"/><path d="M-3.1 3.5Q-3.1 0.2 0 0.2Q3.1 0.2 3.1 3.5Z"/><circle cx="-5" cy="-0.6" r="1.1"/><path d="M-7.1 3.5Q-7.1 1.1 -5 1.1Q-3.9 1.1 -3.6 1.8Q-4.1 2.6 -4.2 3.5Z"/><circle cx="5" cy="-0.6" r="1.1"/><path d="M7.1 3.5Q7.1 1.1 5 1.1Q3.9 1.1 3.6 1.8Q4.1 2.6 4.2 3.5Z"/></g></svg>
<div class="t r" style="left:811px;top:383.79px;font-size:9.7px;font-weight:400;color:#111;">All users</div>
<svg style="left:898.5px;top:379.6px" width="18" height="18" viewBox="-9 -9 18 18"><circle r="8.05" fill="#215a84" stroke="#1a4262" stroke-width="0.7"/><rect x="-2.3" y="-0.55" width="4.6" height="1.5" fill="#dfe7ee"/></svg>
<div class="abs" style="left:923px;top:389px;width:3px;height:1.2px;background:#444"></div><div class="abs" style="left:928px;top:389px;width:3px;height:1.2px;background:#444"></div>
<svg style="left:1045px;top:381.5px" width="14" height="15" viewBox="0 0 14 15"><g fill="none" stroke="#1f4a6a" stroke-width="1.3" stroke-linejoin="round"><path d="M1.3 9.8V1.6Q1.3 0.9 2 0.9H8.8"/><path d="M3.9 4V12.6Q3.9 13.4 4.6 13.4H10.8Q11.6 13.4 11.6 12.6V6.6L9 4Z"/></g><path d="M8.6 3.6L12 7H8.6Z" fill="#1f4a6a"/></svg>
<svg style="left:1064.6px;top:383.20000000000005px" width="11" height="11" viewBox="0 0 10.4 10.2"><path d="M5.2 0.4L6.5 3.8L10.1 3.9L7.3 6.2L8.3 9.7L5.2 7.7L2.1 9.7L3.1 6.2L0.3 3.9L3.9 3.8Z" fill="none" stroke="#1f4a6a" stroke-width="1.1" stroke-linejoin="round"/></svg>
<div class="abs" style="left:16.80000000000001px;top:411.6px;width:12.3px;height:12.4px;border:1.4px solid #111;border-radius:1.1px;background:rgba(255,255,255,0.6)"></div>
<div class="t r" style="left:65px;top:411.79px;font-size:9.7px;font-weight:400;color:#285478;">Beispiel-Liste Informati…</div>
<div class="t r" style="left:206.4px;top:411.96px;font-size:9.5px;font-weight:400;color:#111;">jede Liste kann angepa…</div>
<svg style="left:494.5px;top:403px" width="28" height="28" viewBox="-14 -14 28 28"><circle r="13.8" fill="#e3e6ea"/><g fill="#1f4a6a"><rect x="-6.5" y="-4.8" width="1.9" height="1.7"/><rect x="-6.5" y="-1.9" width="1.9" height="1.7"/><rect x="-6.5" y="0.9" width="1.9" height="1.7"/><rect x="-3.4" y="-4.8" width="9.7" height="1.7"/><rect x="-3.4" y="-1.9" width="9.7" height="1.7"/><rect x="-3.4" y="0.9" width="9.7" height="1.7"/></g></svg>
<div class="t r" style="left:525.7px;top:411.79px;font-size:9.7px;font-weight:400;color:#111;">Table</div>
<div class="t r" style="left:639px;top:411.96px;font-size:9.5px;font-weight:400;color:#111;">Information flow</div>
<svg style="left:782.3px;top:404.79999999999995px" width="24" height="24" viewBox="-12 -12 24 24"><circle r="11.2" fill="#e3e6ea"/><g fill="#1f4a6a"><circle cx="0" cy="-2.1" r="1.6"/><path d="M-3.1 3.5Q-3.1 0.2 0 0.2Q3.1 0.2 3.1 3.5Z"/><circle cx="-5" cy="-0.6" r="1.1"/><path d="M-7.1 3.5Q-7.1 1.1 -5 1.1Q-3.9 1.1 -3.6 1.8Q-4.1 2.6 -4.2 3.5Z"/><circle cx="5" cy="-0.6" r="1.1"/><path d="M7.1 3.5Q7.1 1.1 5 1.1Q3.9 1.1 3.6 1.8Q4.1 2.6 4.2 3.5Z"/></g></svg>
<div class="t r" style="left:811px;top:411.79px;font-size:9.7px;font-weight:400;color:#111;">All users</div>
<svg style="left:898.5px;top:407.6px" width="18" height="18" viewBox="-9 -9 18 18"><circle r="8.05" fill="#215a84" stroke="#1a4262" stroke-width="0.7"/><rect x="-2.3" y="-0.55" width="4.6" height="1.5" fill="#dfe7ee"/></svg>
<div class="abs" style="left:923px;top:417px;width:3px;height:1.2px;background:#444"></div><div class="abs" style="left:928px;top:417px;width:3px;height:1.2px;background:#444"></div>
<svg style="left:1045px;top:409.5px" width="14" height="15" viewBox="0 0 14 15"><g fill="none" stroke="#1f4a6a" stroke-width="1.3" stroke-linejoin="round"><path d="M1.3 9.8V1.6Q1.3 0.9 2 0.9H8.8"/><path d="M3.9 4V12.6Q3.9 13.4 4.6 13.4H10.8Q11.6 13.4 11.6 12.6V6.6L9 4Z"/></g><path d="M8.6 3.6L12 7H8.6Z" fill="#1f4a6a"/></svg>
<svg style="left:1064.6px;top:411.20000000000005px" width="11" height="11" viewBox="0 0 10.4 10.2"><path d="M5.2 0.4L6.5 3.8L10.1 3.9L7.3 6.2L8.3 9.7L5.2 7.7L2.1 9.7L3.1 6.2L0.3 3.9L3.9 3.8Z" fill="none" stroke="#1f4a6a" stroke-width="1.1" stroke-linejoin="round"/></svg>
<div class="abs" style="left:16.80000000000001px;top:439.6px;width:12.3px;height:12.4px;border:1.4px solid #111;border-radius:1.1px;background:rgba(255,255,255,0.6)"></div>
<div class="t r" style="left:65px;top:439.79px;font-size:9.7px;font-weight:400;color:#285478;">Beispiel-Liste Informati…</div>
<div class="t r" style="left:206.4px;top:439.96px;font-size:9.5px;font-weight:400;color:#111;">jede Liste kann angepa…</div>
<svg style="left:494.5px;top:431px" width="28" height="28" viewBox="-14 -14 28 28"><circle r="13.8" fill="#e3e6ea"/><g fill="#1f4a6a"><rect x="-6.5" y="-4.8" width="1.9" height="1.7"/><rect x="-6.5" y="-1.9" width="1.9" height="1.7"/><rect x="-6.5" y="0.9" width="1.9" height="1.7"/><rect x="-3.4" y="-4.8" width="9.7" height="1.7"/><rect x="-3.4" y="-1.9" width="9.7" height="1.7"/><rect x="-3.4" y="0.9" width="9.7" height="1.7"/></g></svg>
<div class="t r" style="left:525.7px;top:439.79px;font-size:9.7px;font-weight:400;color:#111;">Table</div>
<div class="t r" style="left:639px;top:439.96px;font-size:9.5px;font-weight:400;color:#111;">Information system</div>
<svg style="left:782.3px;top:432.79999999999995px" width="24" height="24" viewBox="-12 -12 24 24"><circle r="11.2" fill="#e3e6ea"/><g fill="#1f4a6a"><circle cx="0" cy="-2.1" r="1.6"/><path d="M-3.1 3.5Q-3.1 0.2 0 0.2Q3.1 0.2 3.1 3.5Z"/><circle cx="-5" cy="-0.6" r="1.1"/><path d="M-7.1 3.5Q-7.1 1.1 -5 1.1Q-3.9 1.1 -3.6 1.8Q-4.1 2.6 -4.2 3.5Z"/><circle cx="5" cy="-0.6" r="1.1"/><path d="M7.1 3.5Q7.1 1.1 5 1.1Q3.9 1.1 3.6 1.8Q4.1 2.6 4.2 3.5Z"/></g></svg>
<div class="t r" style="left:811px;top:439.79px;font-size:9.7px;font-weight:400;color:#111;">All users</div>
<svg style="left:898.5px;top:435.6px" width="18" height="18" viewBox="-9 -9 18 18"><circle r="8.05" fill="#215a84" stroke="#1a4262" stroke-width="0.7"/><rect x="-2.3" y="-0.55" width="4.6" height="1.5" fill="#dfe7ee"/></svg>
<div class="abs" style="left:923px;top:445px;width:3px;height:1.2px;background:#444"></div><div class="abs" style="left:928px;top:445px;width:3px;height:1.2px;background:#444"></div>
<svg style="left:1045px;top:437.5px" width="14" height="15" viewBox="0 0 14 15"><g fill="none" stroke="#1f4a6a" stroke-width="1.3" stroke-linejoin="round"><path d="M1.3 9.8V1.6Q1.3 0.9 2 0.9H8.8"/><path d="M3.9 4V12.6Q3.9 13.4 4.6 13.4H10.8Q11.6 13.4 11.6 12.6V6.6L9 4Z"/></g><path d="M8.6 3.6L12 7H8.6Z" fill="#1f4a6a"/></svg>
<svg style="left:1064.6px;top:439.20000000000005px" width="11" height="11" viewBox="0 0 10.4 10.2"><path d="M5.2 0.4L6.5 3.8L10.1 3.9L7.3 6.2L8.3 9.7L5.2 7.7L2.1 9.7L3.1 6.2L0.3 3.9L3.9 3.8Z" fill="none" stroke="#1f4a6a" stroke-width="1.1" stroke-linejoin="round"/></svg>
<div class="abs" style="left:16.80000000000001px;top:467.6px;width:12.3px;height:12.4px;border:1.4px solid #111;border-radius:1.1px;background:rgba(255,255,255,0.6)"></div>
<div class="t r" style="left:65px;top:467.79px;font-size:9.7px;font-weight:400;color:#285478;">Beispiel-Liste Infrastru…</div>
<div class="t r" style="left:206.4px;top:467.96px;font-size:9.5px;font-weight:400;color:#111;">jede Liste kann angepa…</div>
<svg style="left:494.5px;top:459px" width="28" height="28" viewBox="-14 -14 28 28"><circle r="13.8" fill="#e3e6ea"/><g fill="#1f4a6a"><rect x="-6.5" y="-4.8" width="1.9" height="1.7"/><rect x="-6.5" y="-1.9" width="1.9" height="1.7"/><rect x="-6.5" y="0.9" width="1.9" height="1.7"/><rect x="-3.4" y="-4.8" width="9.7" height="1.7"/><rect x="-3.4" y="-1.9" width="9.7" height="1.7"/><rect x="-3.4" y="0.9" width="9.7" height="1.7"/></g></svg>
<div class="t r" style="left:525.7px;top:467.79px;font-size:9.7px;font-weight:400;color:#111;">Table</div>
<div class="t r" style="left:639px;top:467.96px;font-size:9.5px;font-weight:400;color:#111;">Infrastructure element</div>
<svg style="left:782.3px;top:460.79999999999995px" width="24" height="24" viewBox="-12 -12 24 24"><circle r="11.2" fill="#e3e6ea"/><g fill="#1f4a6a"><circle cx="0" cy="-2.1" r="1.6"/><path d="M-3.1 3.5Q-3.1 0.2 0 0.2Q3.1 0.2 3.1 3.5Z"/><circle cx="-5" cy="-0.6" r="1.1"/><path d="M-7.1 3.5Q-7.1 1.1 -5 1.1Q-3.9 1.1 -3.6 1.8Q-4.1 2.6 -4.2 3.5Z"/><circle cx="5" cy="-0.6" r="1.1"/><path d="M7.1 3.5Q7.1 1.1 5 1.1Q3.9 1.1 3.6 1.8Q4.1 2.6 4.2 3.5Z"/></g></svg>
<div class="t r" style="left:811px;top:467.79px;font-size:9.7px;font-weight:400;color:#111;">All users</div>
<svg style="left:898.5px;top:463.6px" width="18" height="18" viewBox="-9 -9 18 18"><circle r="8.05" fill="#215a84" stroke="#1a4262" stroke-width="0.7"/><rect x="-2.3" y="-0.55" width="4.6" height="1.5" fill="#dfe7ee"/></svg>
<div class="abs" style="left:923px;top:473px;width:3px;height:1.2px;background:#444"></div><div class="abs" style="left:928px;top:473px;width:3px;height:1.2px;background:#444"></div>
<svg style="left:1045px;top:465.5px" width="14" height="15" viewBox="0 0 14 15"><g fill="none" stroke="#1f4a6a" stroke-width="1.3" stroke-linejoin="round"><path d="M1.3 9.8V1.6Q1.3 0.9 2 0.9H8.8"/><path d="M3.9 4V12.6Q3.9 13.4 4.6 13.4H10.8Q11.6 13.4 11.6 12.6V6.6L9 4Z"/></g><path d="M8.6 3.6L12 7H8.6Z" fill="#1f4a6a"/></svg>
<svg style="left:1064.6px;top:467.20000000000005px" width="11" height="11" viewBox="0 0 10.4 10.2"><path d="M5.2 0.4L6.5 3.8L10.1 3.9L7.3 6.2L8.3 9.7L5.2 7.7L2.1 9.7L3.1 6.2L0.3 3.9L3.9 3.8Z" fill="none" stroke="#1f4a6a" stroke-width="1.1" stroke-linejoin="round"/></svg>
<div class="abs" style="left:16.80000000000001px;top:495.6px;width:12.3px;height:12.4px;border:1.4px solid #111;border-radius:1.1px;background:rgba(255,255,255,0.6)"></div>
<div class="t r" style="left:65px;top:495.79px;font-size:9.7px;font-weight:400;color:#285478;">Beispiel-Liste IT-Servic…</div>
<div class="t r" style="left:206.4px;top:495.96px;font-size:9.5px;font-weight:400;color:#111;">jede Liste kann angepa…</div>
<svg style="left:494.5px;top:487px" width="28" height="28" viewBox="-14 -14 28 28"><circle r="13.8" fill="#e3e6ea"/><g fill="#1f4a6a"><rect x="-6.5" y="-4.8" width="1.9" height="1.7"/><rect x="-6.5" y="-1.9" width="1.9" height="1.7"/><rect x="-6.5" y="0.9" width="1.9" height="1.7"/><rect x="-3.4" y="-4.8" width="9.7" height="1.7"/><rect x="-3.4" y="-1.9" width="9.7" height="1.7"/><rect x="-3.4" y="0.9" width="9.7" height="1.7"/></g></svg>
<div class="t r" style="left:525.7px;top:495.79px;font-size:9.7px;font-weight:400;color:#111;">Table</div>
<div class="t r" style="left:639px;top:495.96px;font-size:9.5px;font-weight:400;color:#111;">IT service</div>
<svg style="left:782.3px;top:488.79999999999995px" width="24" height="24" viewBox="-12 -12 24 24"><circle r="11.2" fill="#e3e6ea"/><g fill="#1f4a6a"><circle cx="0" cy="-2.1" r="1.6"/><path d="M-3.1 3.5Q-3.1 0.2 0 0.2Q3.1 0.2 3.1 3.5Z"/><circle cx="-5" cy="-0.6" r="1.1"/><path d="M-7.1 3.5Q-7.1 1.1 -5 1.1Q-3.9 1.1 -3.6 1.8Q-4.1 2.6 -4.2 3.5Z"/><circle cx="5" cy="-0.6" r="1.1"/><path d="M7.1 3.5Q7.1 1.1 5 1.1Q3.9 1.1 3.6 1.8Q4.1 2.6 4.2 3.5Z"/></g></svg>
<div class="t r" style="left:811px;top:495.79px;font-size:9.7px;font-weight:400;color:#111;">All users</div>
<svg style="left:898.5px;top:491.6px" width="18" height="18" viewBox="-9 -9 18 18"><circle r="8.05" fill="#215a84" stroke="#1a4262" stroke-width="0.7"/><rect x="-2.3" y="-0.55" width="4.6" height="1.5" fill="#dfe7ee"/></svg>
<div class="abs" style="left:923px;top:501px;width:3px;height:1.2px;background:#444"></div><div class="abs" style="left:928px;top:501px;width:3px;height:1.2px;background:#444"></div>
<svg style="left:1045px;top:493.5px" width="14" height="15" viewBox="0 0 14 15"><g fill="none" stroke="#1f4a6a" stroke-width="1.3" stroke-linejoin="round"><path d="M1.3 9.8V1.6Q1.3 0.9 2 0.9H8.8"/><path d="M3.9 4V12.6Q3.9 13.4 4.6 13.4H10.8Q11.6 13.4 11.6 12.6V6.6L9 4Z"/></g><path d="M8.6 3.6L12 7H8.6Z" fill="#1f4a6a"/></svg>
<svg style="left:1064.6px;top:495.20000000000005px" width="11" height="11" viewBox="0 0 10.4 10.2"><path d="M5.2 0.4L6.5 3.8L10.1 3.9L7.3 6.2L8.3 9.7L5.2 7.7L2.1 9.7L3.1 6.2L0.3 3.9L3.9 3.8Z" fill="none" stroke="#1f4a6a" stroke-width="1.1" stroke-linejoin="round"/></svg>
<div class="abs" style="left:0;top:515px;width:calc(100% - 0.8px);height:28px;background:#eff1f5"></div>
<svg style="left:494.5px;top:515px" width="28" height="28" viewBox="-14 -14 28 28"><circle r="13.8" fill="#e3e6ea"/></svg>
<svg style="left:782.3px;top:516.8px" width="24" height="24" viewBox="-12 -12 24 24"><circle r="11.2" fill="#e3e6ea"/></svg>
<svg style="left:898.5px;top:519.6px" width="18" height="18" viewBox="-9 -9 18 18"><circle r="8.05" fill="#215a84" stroke="#1a4262" stroke-width="0.7"/></svg>
</div>
<svg style="left:244px;top:192px" width="24" height="24" viewBox="244 192 24 24">
 <path d="M251.2 198Q251 196.5 252.4 196.4Q253.7 196.4 254 197.8L255 201.4Q256.7 200.5 257.7 201.9Q259.3 201.1 260.3 202.5Q261.9 201.9 262.7 203.2Q263.7 203.9 263.5 205.5L262.7 209.2Q262.3 210.9 261.2 211.9L255 212.4Q253.6 210.6 252 208.6L249 205.4Q248 204.2 248.9 203.4Q249.9 202.6 251.1 203.5L252.1 204.4Z" fill="#fff" stroke="#111" stroke-width="1" stroke-linejoin="round"/>
 <path d="M256.2 206.3V209.6M258 206.3V209.6M259.8 206.3V209.6" stroke="#222" stroke-width="0.75" stroke-linecap="round"/>
</svg>
</div></body></html>
